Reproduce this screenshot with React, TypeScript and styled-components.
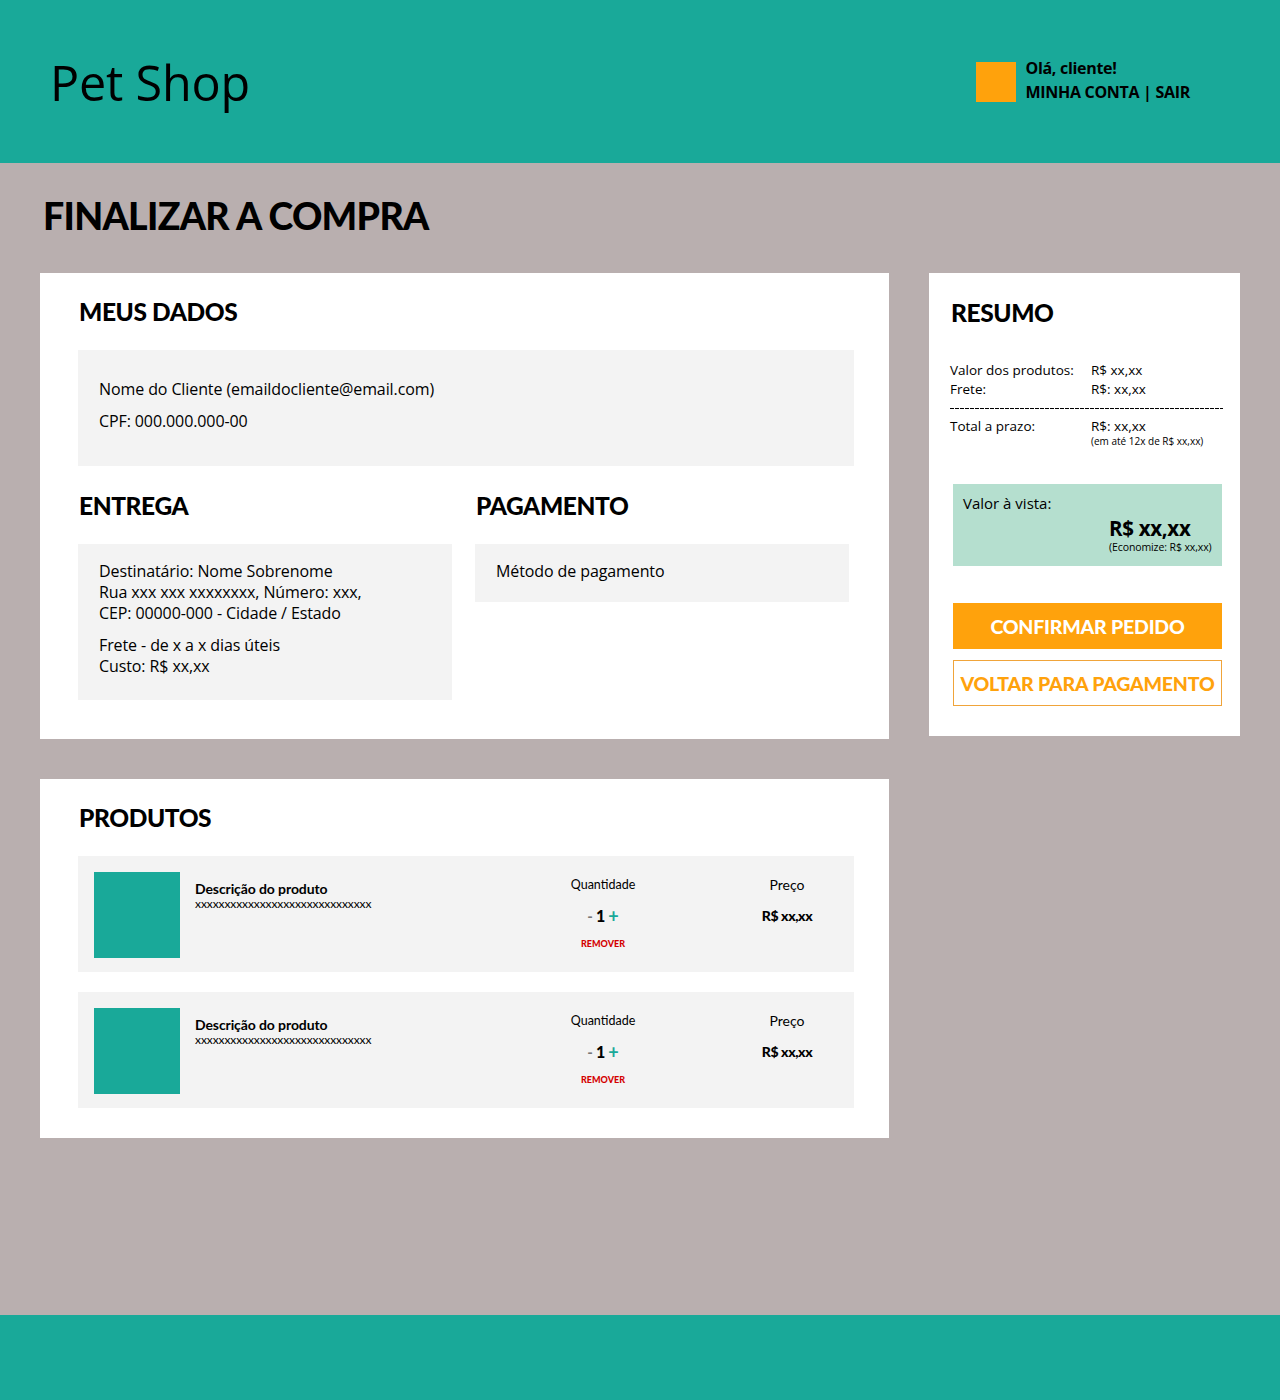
import React from "react";
import styled, { createGlobalStyle } from "styled-components";

const Global = createGlobalStyle`
  html, body { margin: 0; padding: 0; }
  body { font-family: "Open Sans", "Noto Sans", sans-serif; color: #000; background: #b9afaf; }
  * { box-sizing: border-box; }
`;

const HEAD = `"Lato", "Inter", sans-serif`;
const BODY = `"Open Sans", "Noto Sans", sans-serif`;

const Page = styled.div`
  min-height: 1400px;
  display: flex;
  flex-direction: column;
  background: #b9afaf;
`;

const Header = styled.header`
  height: 163px;
  background: #19a999;
  display: flex;
  align-items: center;
  justify-content: space-between;
  padding: 0 90px 0 50px;
`;

const Logo = styled.div`
  font-family: ${BODY};
  font-size: 48.5px;
  font-weight: 400;
  letter-spacing: -0.2px;
`;

const UserBox = styled.div`
  display: flex;
  align-items: center;
  gap: 9px;
`;

const Avatar = styled.div`
  width: 40px;
  height: 40px;
  background: #ffa20c;
`;

const UserText = styled.div`
  font-family: ${BODY};
  font-weight: 700;
  font-size: 16px;
  line-height: 24px;
  letter-spacing: -0.3px;
  margin-top: -3px;
`;

const Main = styled.main`
  flex: 1;
  padding: 30px 40px 40px;
`;

const Title = styled.h1`
  font-family: ${HEAD};
  font-weight: 900;
  font-size: 37.5px;
  line-height: 46px;
  margin: 0 0 34px 3px;
  letter-spacing: -0.7px;
`;

const Grid = styled.div`
  display: grid;
  grid-template-columns: 849px 311px;
  gap: 40px;
  align-items: start;
`;

const Column = styled.div`
  display: flex;
  flex-direction: column;
  gap: 40px;
`;

const Card = styled.section<{ $pad: string }>`
  background: #fff;
  padding: ${(p) => p.$pad};
`;

const SectionTitle = styled.h2<{ $mb?: number }>`
  font-family: ${HEAD};
  font-weight: 900;
  font-size: 24.5px;
  line-height: 30px;
  margin: 0 0 ${(p) => p.$mb ?? 23}px 1px;
  letter-spacing: -0.4px;
`;

const GrayBox = styled.div<{ $pad: string }>`
  background: #f3f3f3;
  padding: ${(p) => p.$pad};
  font-family: ${BODY};
  font-size: 16px;
  line-height: 21px;
`;

const Line = styled.div<{ $mt?: number }>`
  margin-top: ${(p) => p.$mt ?? 0}px;
  letter-spacing: -0.1px;
`;

const TwoCols = styled.div`
  display: grid;
  grid-template-columns: 374px 374px;
  gap: 23px;
  margin-top: 25px;
  align-items: start;
`;

const SubCol = styled.div`
  display: flex;
  flex-direction: column;
`;

const Rows = styled.div`
  display: flex;
  flex-direction: column;
  gap: 20px;
`;

const ProductRow = styled.div`
  background: #f3f3f3;
  padding: 16px 7px 14px 16px;
  display: flex;
  align-items: flex-start;
`;

const Thumb = styled.div`
  width: 86px;
  height: 86px;
  background: #19a999;
  flex-shrink: 0;
`;

const Desc = styled.div`
  flex: 1;
  margin-left: 15px;
  padding-top: 8px;
`;

const DescTitle = styled.div`
  font-family: ${HEAD};
  font-weight: 700;
  font-size: 14px;
  line-height: 17px;
  letter-spacing: -0.1px;
`;

const DescSub = styled.div`
  font-family: ${HEAD};
  font-size: 12px;
  line-height: 14px;
  letter-spacing: -0.1px;
`;

const Cell = styled.div<{ $ml?: number }>`
  width: 120px;
  margin-left: ${(p) => p.$ml ?? 0}px;
  display: flex;
  flex-direction: column;
  align-items: center;
  padding-top: 4px;
`;

const CellLabel = styled.div<{ $size: number }>`
  font-family: ${HEAD};
  font-weight: 400;
  font-size: ${(p) => p.$size}px;
  line-height: 17px;
`;

const Qty = styled.div`
  margin-top: 13px;
  display: flex;
  align-items: center;
  gap: 3px;
  font-family: ${HEAD};
  line-height: 20px;
`;

const QtyBtn = styled.span<{ $color: string; $size: number }>`
  color: ${(p) => p.$color};
  font-size: ${(p) => p.$size}px;
  font-weight: 700;
`;

const QtyNum = styled.span`
  font-weight: 900;
  font-size: 16px;
`;

const Remove = styled.div`
  margin-top: 12px;
  font-family: ${HEAD};
  font-weight: 900;
  font-size: 9px;
  color: #d40000;
  line-height: 12px;
`;

const Price = styled.div`
  margin-top: 14px;
  font-family: ${HEAD};
  font-weight: 900;
  font-size: 14px;
  line-height: 18px;
  letter-spacing: -0.4px;
`;

const SummaryTable = styled.div`
  font-family: ${BODY};
  font-size: 13.5px;
  line-height: 19px;
  margin-top: 33px;
`;

const SumRow = styled.div`
  display: grid;
  grid-template-columns: 141px 1fr;
`;

const Dashes = styled.div`
  height: 1px;
  margin: 9px 0 8px;
  background: repeating-linear-gradient(90deg, #000 0 4px, transparent 4px 5px);
`;

const Small = styled.div`
  font-size: 10px;
  line-height: 11px;
`;

const CashBox = styled.div`
  background: #b5dfcf;
  margin: 37px 1px 0 3px;
  padding: 9px 8px 12px 10px;
  font-family: ${BODY};
  display: flex;
  flex-direction: column;
`;

const CashLabel = styled.div`
  font-size: 15px;
  line-height: 20px;
`;

const CashValue = styled.div`
  margin-left: 146px;
  font-weight: 700;
  font-size: 20.5px;
  line-height: 26px;
  margin-top: 2px;
  letter-spacing: -0.3px;
`;

const CashSave = styled.div`
  margin-left: 146px;
  font-size: 10.5px;
  line-height: 13px;
  letter-spacing: -0.1px;
`;

const Button = styled.button<{ $solid?: boolean }>`
  display: block;
  width: 269px;
  height: 46px;
  margin-left: 3px;
  font-family: ${HEAD};
  font-weight: 900;
  font-size: 19.5px;
  letter-spacing: -0.2px;
  border: 1px solid ${(p) => (p.$solid ? "#ffa20c" : "#f0a43a")};
  background: ${(p) => (p.$solid ? "#ffa20c" : "#fff")};
  color: ${(p) => (p.$solid ? "#fff" : "#ffa20c")};
  padding: 0;
  cursor: pointer;
`;

const Buttons = styled.div`
  display: flex;
  flex-direction: column;
  gap: 11px;
  margin-top: 37px;
`;

const Footer = styled.footer`
  height: 85px;
  background: #19a999;
`;

const products = [1, 2];

export default function App() {
  return (
    <Page>
      <Global />
      <Header>
        <Logo>Pet Shop</Logo>
        <UserBox>
          <Avatar />
          <UserText>
            <div>Olá, cliente!</div>
            <div>MINHA CONTA | SAIR</div>
          </UserText>
        </UserBox>
      </Header>
      <Main>
        <Title>FINALIZAR A COMPRA</Title>
        <Grid>
          <Column>
            <Card $pad="24px 35px 39px 38px">
              <SectionTitle>MEUS DADOS</SectionTitle>
              <GrayBox $pad="29px 20px 34px 21px">
                <Line>Nome do Cliente (emaildocliente@email.com)</Line>
                <Line $mt={11}>CPF: 000.000.000-00</Line>
              </GrayBox>
              <TwoCols>
                <SubCol>
                  <SectionTitle>ENTREGA</SectionTitle>
                  <GrayBox $pad="17px 20px 23px 21px">
                    <Line>Destinatário: Nome Sobrenome</Line>
                    <Line>Rua xxx xxx xxxxxxxx, Número: xxx,</Line>
                    <Line>CEP: 00000-000 - Cidade / Estado</Line>
                    <Line $mt={11}>Frete - de x a x dias úteis</Line>
                    <Line>Custo: R$ xx,xx</Line>
                  </GrayBox>
                </SubCol>
                <SubCol>
                  <SectionTitle>PAGAMENTO</SectionTitle>
                  <GrayBox $pad="17px 20px 20px 21px">
                    <Line>Método de pagamento</Line>
                  </GrayBox>
                </SubCol>
              </TwoCols>
            </Card>
            <Card $pad="24px 35px 30px 38px">
              <SectionTitle>PRODUTOS</SectionTitle>
              <Rows>
                {products.map((id) => (
                  <ProductRow key={id}>
                    <Thumb />
                    <Desc>
                      <DescTitle>Descrição do produto</DescTitle>
                      <DescSub>xxxxxxxxxxxxxxxxxxxxxxxxxxxxxx</DescSub>
                    </Desc>
                    <Cell>
                      <CellLabel $size={12.5}>Quantidade</CellLabel>
                      <Qty>
                        <QtyBtn $color="#777" $size={15}>-</QtyBtn>
                        <QtyNum>1</QtyNum>
                        <QtyBtn $color="#19a999" $size={18}>+</QtyBtn>
                      </Qty>
                      <Remove>REMOVER</Remove>
                    </Cell>
                    <Cell $ml={64}>
                      <CellLabel $size={14}>Preço</CellLabel>
                      <Price>R$ xx,xx</Price>
                    </Cell>
                  </ProductRow>
                ))}
              </Rows>
            </Card>
          </Column>
          <Card $pad="25px 17px 30px 21px">
            <SectionTitle $mb={0}>RESUMO</SectionTitle>
            <SummaryTable>
              <SumRow>
                <div>Valor dos produtos:</div>
                <div>R$ xx,xx</div>
              </SumRow>
              <SumRow>
                <div>Frete:</div>
                <div>R$: xx,xx</div>
              </SumRow>
              <Dashes />
              <SumRow>
                <div>Total a prazo:</div>
                <div>
                  <div>R$: xx,xx</div>
                  <Small>(em até 12x de R$ xx,xx)</Small>
                </div>
              </SumRow>
            </SummaryTable>
            <CashBox>
              <CashLabel>Valor à vista:</CashLabel>
              <CashValue>R$ xx,xx</CashValue>
              <CashSave>(Economize: R$ xx,xx)</CashSave>
            </CashBox>
            <Buttons>
              <Button $solid>CONFIRMAR PEDIDO</Button>
              <Button>VOLTAR PARA PAGAMENTO</Button>
            </Buttons>
          </Card>
        </Grid>
      </Main>
      <Footer />
    </Page>
  );
}
